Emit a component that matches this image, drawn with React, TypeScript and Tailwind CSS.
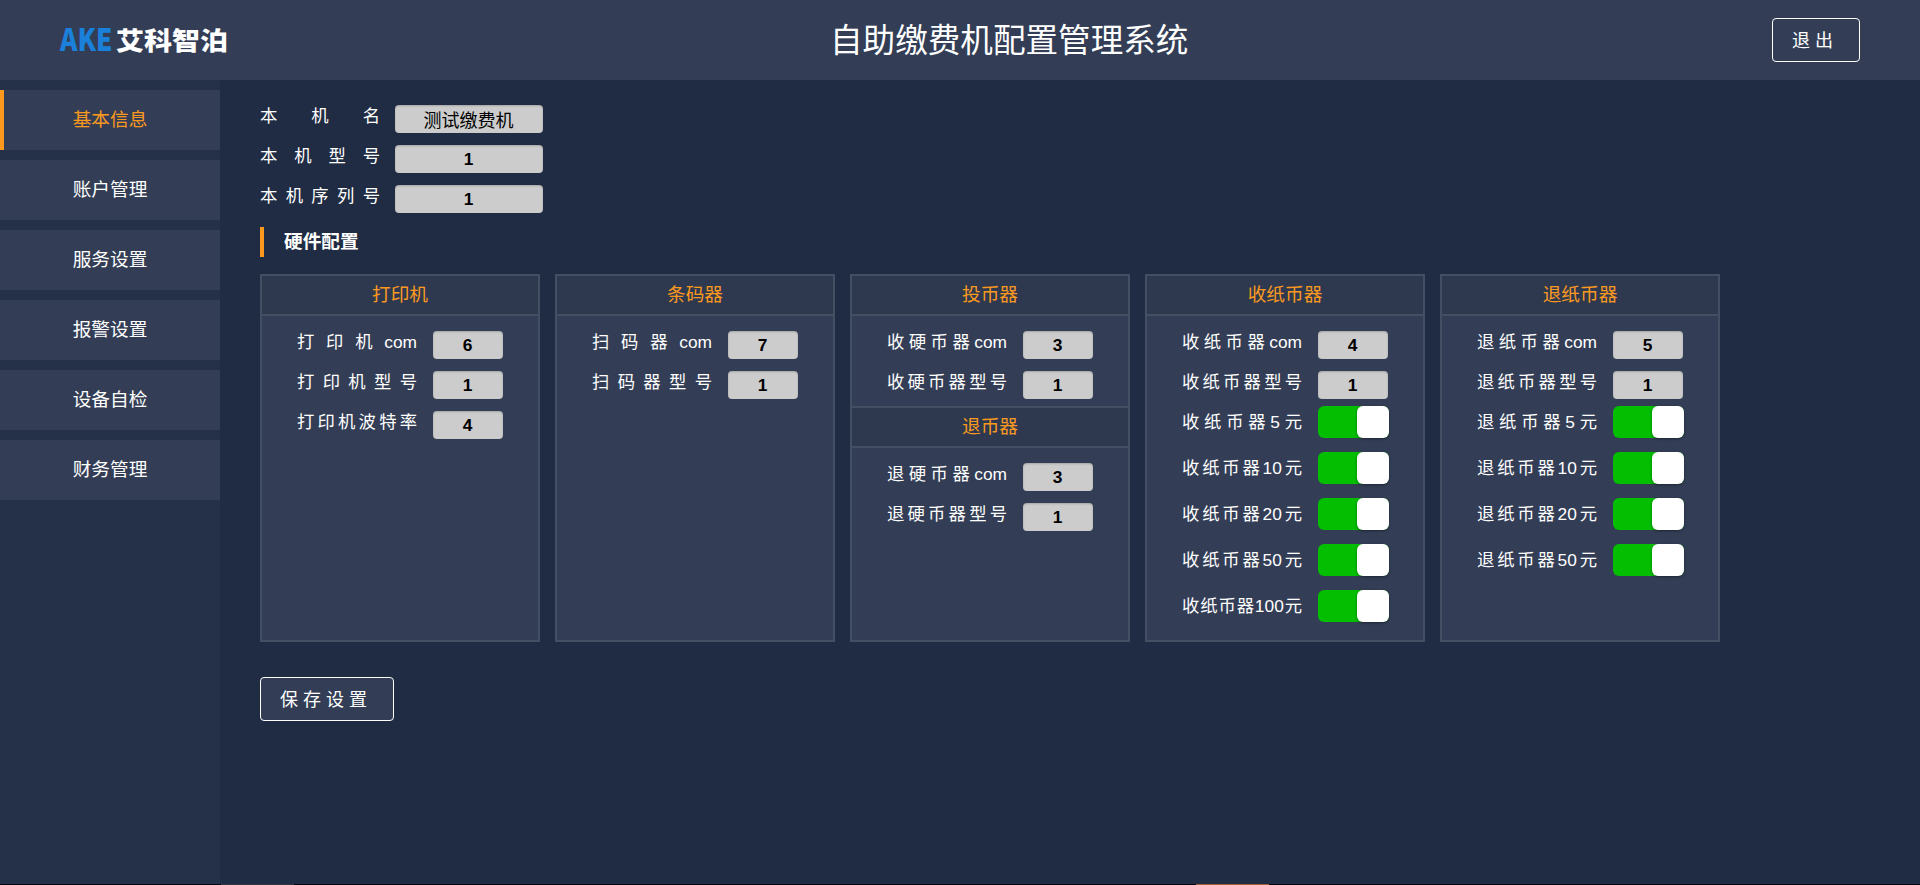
import React from "react";

const menu = ["基本信息", "账户管理", "服务设置", "报警设置", "设备自检", "财务管理"];

function Label({ text }: { text: string }) {
  return (
    <span className="h-[22px] w-[120px] text-[17.33px] leading-[22px] whitespace-nowrap [text-align-last:justify]">
      {text}
    </span>
  );
}

function Value({ text, wide = false }: { text: string; wide?: boolean }) {
  return (
    <span
      className={
        "flex h-7 items-center justify-center rounded-[4px] bg-[#cccccc] pr-px leading-none text-black shadow-[inset_0_1px_2px_rgba(0,0,0,0.2)] " +
        (wide ? "w-[148px] " : "w-[70px] ") +
        (/^\d+$/.test(text) ? "pt-px text-[17.33px] font-bold" : "pt-[3px] text-[18px]")
      }
    >
      {text}
    </span>
  );
}

function Row({ label, value }: { label: string; value: string }) {
  return (
    <div className="flex h-10 items-start gap-4">
      <Label text={label} />
      <Value text={value} />
    </div>
  );
}

function ToggleRow({ label }: { label: string }) {
  return (
    <div className="flex h-[46px] items-start gap-4">
      <Label text={label} />
      <span className="-mt-[5px] flex h-8 w-[71px] justify-end rounded-[6px] bg-[#04be02]">
        <span className="h-8 w-8 rounded-[6px] bg-white shadow-[0_1px_3px_rgba(0,0,0,0.4)]" />
      </span>
    </div>
  );
}

function CardTitle({ text }: { text: string }) {
  return (
    <div className="h-10 border-b-2 border-[#434f63] bg-[#2e394f] text-center text-[18.67px] leading-[38px] text-[#fb991f]">
      {text}
    </div>
  );
}

function Card({ children }: { children: React.ReactNode }) {
  return <section className="h-[368px] w-[280px] border-2 border-[#434f63] bg-[#333e56]">{children}</section>;
}

function Fields({ children }: { children: React.ReactNode }) {
  return <div className="pt-[15px] pl-[35px]">{children}</div>;
}

export default function App() {
  return (
    <div className="flex h-[885px] w-[1920px] flex-col overflow-hidden bg-[#202c43] font-['Liberation_Sans','Noto_Sans_CJK_SC',sans-serif] text-white">
      <header className="flex h-20 shrink-0 items-center justify-between bg-[#333e56] pr-[60px] pl-[60px]">
        <div className="flex h-6 w-[712px] items-center font-['Noto_Sans_CJK_SC',sans-serif] font-black">
          <span className="w-[56px] shrink-0 pt-0.5">
            <span className="inline-block origin-left scale-x-[0.85] text-[31px] leading-6 text-[#1a80da]">AKE</span>
          </span>
          <span className="inline-block origin-left scale-x-[1.12] pb-0.5 text-[25px] leading-6">艾科智泊</span>
        </div>
        <h1 className="flex-1 pt-0.5 text-[32.6px] leading-none">
          <span className="ml-[58px]">自助缴费机配置管理系统</span>
        </h1>
        <button className="h-11 rounded-[4px] border border-white pt-0.5 pr-[21px] pl-[19px] text-[18px] tracking-[5px]">
          退出
        </button>
      </header>

      <div className="flex min-h-0 flex-1">
        <nav className="flex w-[220px] flex-col gap-2.5 bg-[#253148] pt-2.5">
          {menu.map((item, i) => (
            <a
              key={item}
              className={
                "block h-[60px] bg-[#333e56] text-center text-[18.67px] leading-[60px] " +
                (i === 0 ? "border-l-4 border-[#fb991f] pr-1 text-[#fb991f]" : "")
              }
            >
              {item}
            </a>
          ))}
        </nav>

        <main className="flex flex-1 flex-col items-start pt-[25px] pl-10">
          {[
            ["本机名", "测试缴费机"],
            ["本机型号", "1"],
            ["本机序列号", "1"],
          ].map(([label, value]) => (
            <div key={label} className="flex h-10 items-start gap-[15px]">
              <Label text={label} />
              <Value text={value} wide />
            </div>
          ))}

          <h2 className="mt-[2px] h-[30px] border-l-4 border-[#fb991f] pl-5 text-[18.67px] leading-[30px] font-bold">
            硬件配置
          </h2>

          <div className="mt-[17px] flex gap-[15px]">
            <Card>
              <CardTitle text="打印机" />
              <Fields>
                <Row label="打印机com" value="6" />
                <Row label="打印机型号" value="1" />
                <Row label="打印机波特率" value="4" />
              </Fields>
            </Card>
            <Card>
              <CardTitle text="条码器" />
              <Fields>
                <Row label="扫码器com" value="7" />
                <Row label="扫码器型号" value="1" />
              </Fields>
            </Card>
            <Card>
              <CardTitle text="投币器" />
              <Fields>
                <Row label="收硬币器com" value="3" />
                <Row label="收硬币器型号" value="1" />
              </Fields>
              <div className="-mt-[5px] border-t-2 border-[#434f63]">
                <CardTitle text="退币器" />
              </div>
              <Fields>
                <Row label="退硬币器com" value="3" />
                <Row label="退硬币器型号" value="1" />
              </Fields>
            </Card>
            <Card>
              <CardTitle text="收纸币器" />
              <Fields>
                <Row label="收纸币器com" value="4" />
                <Row label="收纸币器型号" value="1" />
                <ToggleRow label="收纸币器5元" />
                <ToggleRow label="收纸币器10元" />
                <ToggleRow label="收纸币器20元" />
                <ToggleRow label="收纸币器50元" />
                <ToggleRow label="收纸币器100元" />
              </Fields>
            </Card>
            <Card>
              <CardTitle text="退纸币器" />
              <Fields>
                <Row label="退纸币器com" value="5" />
                <Row label="退纸币器型号" value="1" />
                <ToggleRow label="退纸币器5元" />
                <ToggleRow label="退纸币器10元" />
                <ToggleRow label="退纸币器20元" />
                <ToggleRow label="退纸币器50元" />
              </Fields>
            </Card>
          </div>

          <button className="mt-[35px] h-11 rounded-[4px] border border-white bg-[#333e56] pt-0.5 pr-[21px] pl-[19px] text-[18px] tracking-[5px]">
            保存设置
          </button>
        </main>
      </div>

      <div className="flex h-px shrink-0 bg-[#05050d]">
        <span className="ml-[221px] w-[73px] bg-[#34353d]" />
        <span className="ml-[902px] w-[73px] bg-[#a2603a]" />
      </div>
    </div>
  );
}
